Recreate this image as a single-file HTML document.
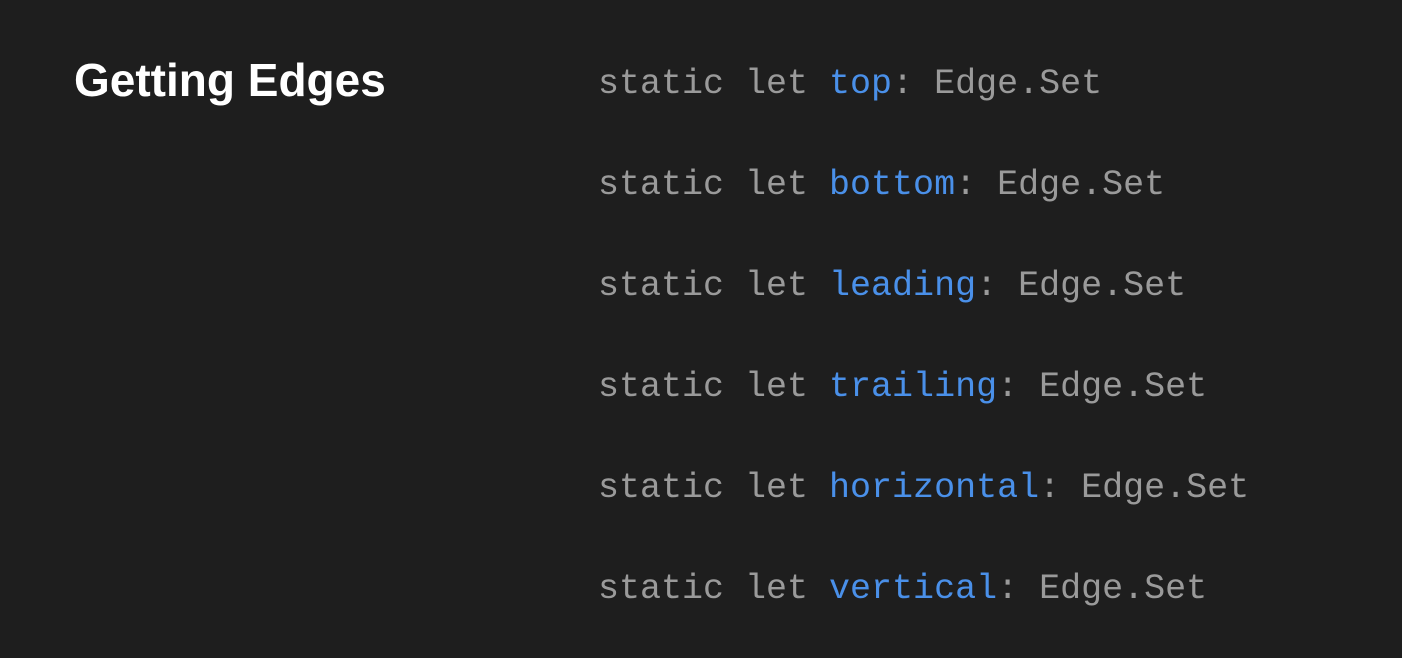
<!DOCTYPE html>
<html><head><style>
html,body{margin:0;padding:0;background:#1e1e1e;width:1402px;height:658px;overflow:hidden}
h1{position:absolute;left:74px;margin:0;font:bold 46px/1 "Liberation Sans",sans-serif;color:#fff;top:57px}
.r{position:absolute;left:598px;font:35px/1 "Liberation Mono",monospace;color:#9a9a9a;white-space:pre}
.b{color:#4a90e9}
</style></head><body>
<h1>Getting Edges</h1>
<div class="r" style="top:67px">static let <span class="b">top</span>: Edge.Set</div>
<div class="r" style="top:168px">static let <span class="b">bottom</span>: Edge.Set</div>
<div class="r" style="top:269px">static let <span class="b">leading</span>: Edge.Set</div>
<div class="r" style="top:370px">static let <span class="b">trailing</span>: Edge.Set</div>
<div class="r" style="top:471px">static let <span class="b">horizontal</span>: Edge.Set</div>
<div class="r" style="top:572px">static let <span class="b">vertical</span>: Edge.Set</div>
</body></html>
